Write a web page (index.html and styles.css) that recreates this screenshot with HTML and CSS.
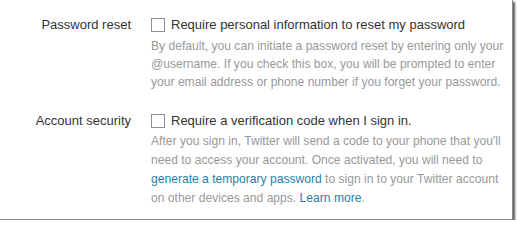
FILE: index.html
```html
<!DOCTYPE html>
<html>
<head>
<meta charset="utf-8">
<link rel="stylesheet" href="styles.css">
</head>
<body>
<div class="frame">
  <div class="settings">
    <div class="label">Password reset</div>
    <div class="control">
      <div class="check-line"><span class="box"></span><span>Require personal information to reset my password</span></div>
      <p class="help">By default, you can initiate a password reset by entering only your @username. If you check this box, you will be prompted to enter your email address or phone number if you forget your password.</p>
    </div>
    <div class="label">Account security</div>
    <div class="control">
      <div class="check-line"><span class="box"></span><span>Require a verification code when I sign in.</span></div>
      <p class="help help2">After you sign in, Twitter will send a code to your phone that you'll need to access your account. Once activated, you will need to <a href="#">generate a temporary password</a> to sign in to your Twitter account on other devices and apps. <a href="#">Learn more</a>.</p>
    </div>
  </div>
</div>
</body>
</html>
```
FILE: styles.css
```css
html, body {
  margin: 0;
  padding: 0;
  background: #fff;
}
body {
  font-family: "Liberation Sans", Arial, sans-serif;
}
.frame {
  width: 512px;
  height: 219px;
  background: #fff;
  border-right: 1px solid #8a8a8a;
  border-bottom: 1px solid #8a8a8a;
  box-shadow: 2px 2px 2px rgba(0, 0, 0, 0.65);
  box-sizing: content-box;
}
.settings {
  display: grid;
  grid-template-columns: 131px 1fr;
  column-gap: 20px;
  row-gap: 21px;
  padding-top: 16px;
}
.label {
  text-align: right;
  font-size: 13px;
  line-height: 18px;
  color: #333;
}
.check-line {
  display: flex;
  align-items: center;
  gap: 6px;
  font-size: 13px;
  line-height: 18px;
  color: #333;
}
.box {
  width: 12px;
  height: 12px;
  border: 1px solid #8e8e8e;
  background: #fff;
  flex: none;
}
.help {
  margin: 3px 0 0;
  font-size: 12.1px;
  line-height: 18px;
  color: #999;
  width: 360px;
}
.help2 {
  line-height: 19px;
  margin-top: 2px;
}
.help a {
  color: #1f7fa8;
  text-decoration: none;
}
```
